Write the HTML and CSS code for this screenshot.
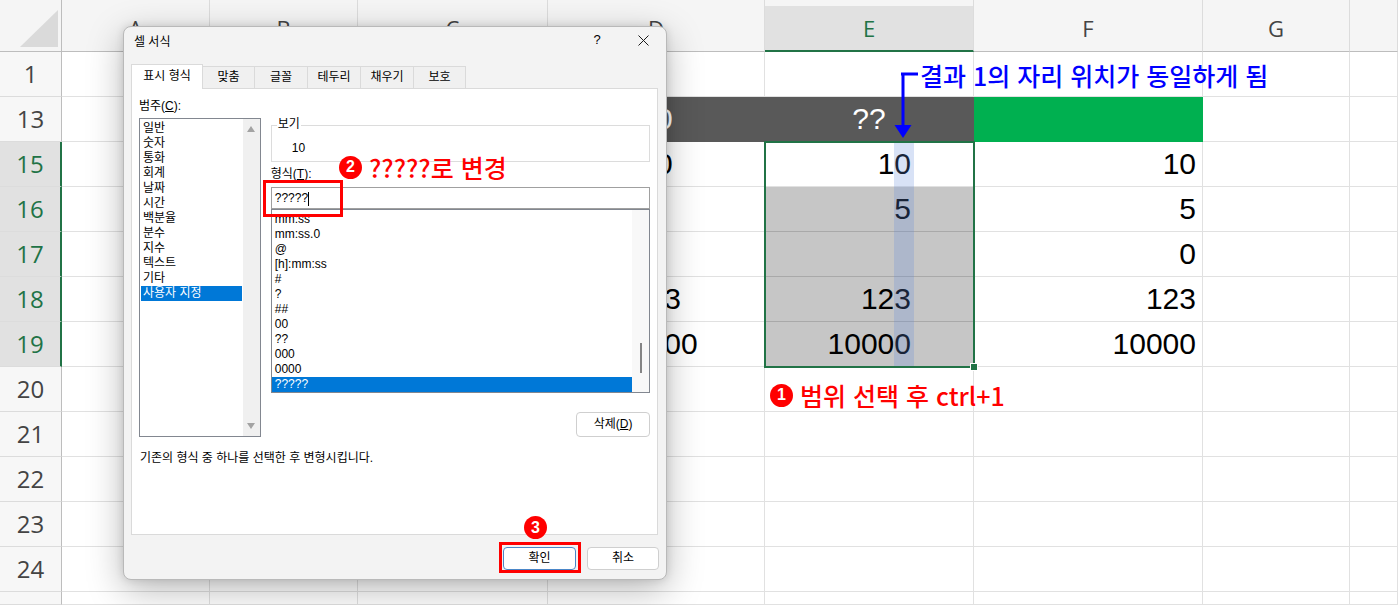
FILE: index.html
```html
<!DOCTYPE html>
<html lang="ko">
<head>
    <meta charset="UTF-8">
    <title>셀 서식</title>
    <link rel="stylesheet" href="styles.css">
</head>
<body>
<!--시트-->
<div id="sheet">
    <div class="row head">
        <div class="corner"><svg width="61" height="51"><polygon points="20,47 58,47 58,10" fill="#dadada"/></svg></div>
        <div class="ch">A</div><div class="ch">B</div><div class="ch">C</div><div class="ch">D</div><div class="ch sel">E</div><div class="ch">F</div><div class="ch">G</div><div class="ch"></div>
    </div>
    <div class="row"><div class="rh">1</div><div class="c"></div><div class="c"></div><div class="c"></div><div class="c"></div><div class="c"></div><div class="c"></div><div class="c"></div><div class="c"></div></div>
    <div class="row"><div class="rh">13</div><div class="c"></div><div class="c dark"></div><div class="c dark"></div><div class="c dark mid">10</div><div class="c dark mid narrow">??</div><div class="c green"></div><div class="c"></div><div class="c"></div></div>
    <div class="row"><div class="rh sel">15</div><div class="c"></div><div class="c"></div><div class="c"></div><div class="c mid">10</div><div class="c num e">10</div><div class="c num">10</div><div class="c"></div><div class="c"></div></div>
    <div class="row"><div class="rh sel">16</div><div class="c"></div><div class="c"></div><div class="c"></div><div class="c mid">5</div><div class="c num e gray">5</div><div class="c num">5</div><div class="c"></div><div class="c"></div></div>
    <div class="row"><div class="rh sel">17</div><div class="c"></div><div class="c"></div><div class="c"></div><div class="c mid">0</div><div class="c num e gray"></div><div class="c num">0</div><div class="c"></div><div class="c"></div></div>
    <div class="row"><div class="rh sel">18</div><div class="c"></div><div class="c"></div><div class="c"></div><div class="c mid">123</div><div class="c num e gray">123</div><div class="c num">123</div><div class="c"></div><div class="c"></div></div>
    <div class="row"><div class="rh sel">19</div><div class="c"></div><div class="c"></div><div class="c"></div><div class="c mid">10000</div><div class="c num e gray">10000</div><div class="c num">10000</div><div class="c"></div><div class="c"></div></div>
    <div class="row"><div class="rh">20</div><div class="c"></div><div class="c"></div><div class="c"></div><div class="c"></div><div class="c"></div><div class="c"></div><div class="c"></div><div class="c"></div></div>
    <div class="row"><div class="rh">21</div><div class="c"></div><div class="c"></div><div class="c"></div><div class="c"></div><div class="c"></div><div class="c"></div><div class="c"></div><div class="c"></div></div>
    <div class="row"><div class="rh">22</div><div class="c"></div><div class="c"></div><div class="c"></div><div class="c"></div><div class="c"></div><div class="c"></div><div class="c"></div><div class="c"></div></div>
    <div class="row"><div class="rh">23</div><div class="c"></div><div class="c"></div><div class="c"></div><div class="c"></div><div class="c"></div><div class="c"></div><div class="c"></div><div class="c"></div></div>
    <div class="row"><div class="rh">24</div><div class="c"></div><div class="c"></div><div class="c"></div><div class="c"></div><div class="c"></div><div class="c"></div><div class="c"></div><div class="c"></div></div>
    <div class="row last"><div class="rh"></div><div class="c"></div><div class="c"></div><div class="c"></div><div class="c"></div><div class="c"></div><div class="c"></div><div class="c"></div><div class="c"></div></div>
</div>

<!--선택 범위-->
<div class="guide"></div>
<div class="selection"><span class="handle"></span></div>

<!--설명-->
<svg class="arrow" width="30" height="70">
    <path d="M11 4 H28 M13 3 V56" stroke="#0000ff" stroke-width="3" fill="none"/>
    <polygon points="4.5,55 21.5,55 13,68" fill="#0000ff"/>
</svg>
<div class="note blue">결과 1의 자리 위치가 동일하게 됨</div>
<div class="note red step1"><span class="num-badge">1</span>범위 선택 후 ctrl+1</div>

<!--셀 서식 대화상자-->
<div class="dialog">
    <div class="titlebar">
        <span class="title">셀 서식</span>
        <span class="tb-btn help">?</span>
        <span class="tb-btn"><svg width="11" height="11"><path d="M0.5 0.5 L10.5 10.5 M10.5 0.5 L0.5 10.5" stroke="#1a1a1a" stroke-width="1"/></svg></span>
    </div>
    <div class="tabs">
        <div class="tab on wide">표시 형식</div>
        <div class="tab slim">맞춤</div>
        <div class="tab">글꼴</div>
        <div class="tab">테두리</div>
        <div class="tab">채우기</div>
        <div class="tab slim">보호</div>
    </div>
    <div class="panel">
        <div class="cols">
            <div class="left">
                <div class="label">범주(<u>C</u>):</div>
                <div class="listbox cat">
                    <ul>
                        <li>일반</li>
                        <li>숫자</li>
                        <li>통화</li>
                        <li>회계</li>
                        <li>날짜</li>
                        <li>시간</li>
                        <li>백분율</li>
                        <li>분수</li>
                        <li>지수</li>
                        <li>텍스트</li>
                        <li>기타</li>
                        <li class="on">사용자 지정</li>
                    </ul>
                    <div class="vscroll"><span class="up"></span><span class="down"></span></div>
                </div>
            </div>
            <div class="right">
                <div class="preview">
                    <span class="preview-label">보기</span>
                    10
                </div>
                <div class="label fmt-label">형식(<u>T</u>):</div>
                <div class="input">?????<span class="caret"></span></div>
                <div class="listbox fmt">
                    <ul>
                        <li>mm:ss</li>
                        <li>mm:ss.0</li>
                        <li>@</li>
                        <li>[h]:mm:ss</li>
                        <li>#</li>
                        <li>?</li>
                        <li>##</li>
                        <li>00</li>
                        <li>??</li>
                        <li>000</li>
                        <li>0000</li>
                        <li class="on">?????</li>
                    </ul>
                    <div class="vscroll light"><span class="thumb"></span></div>
                </div>
                <div class="btn-row"><span class="btn del">삭제(<u>D</u>)</span></div>
            </div>
        </div>
        <p class="hint">기존의 형식 중 하나를 선택한 후 변형시킵니다.</p>
    </div>
    <div class="footer">
        <span class="btn ok">확인</span>
        <span class="btn">취소</span>
    </div>
</div>

<!--단계 표시-->
<div class="note red step2"><span class="num-badge">2</span>?????로 변경</div>
<div class="redbox box-input"></div>
<div class="redbox box-ok"></div>
<span class="num-badge step3">3</span>
</body>
</html>
```

FILE: styles.css
```css
* {
    padding: 0;
    margin: 0;
    box-sizing: border-box;
}

body {
    width: 1398px;
    height: 605px;
    overflow: hidden;
    position: relative;
    background: #fff;
    font-family: "Liberation Sans", "Noto Sans CJK KR", sans-serif;
}

li {
    list-style: none;
}

/* 시트 */
#sheet {
    width: 1398px;
    height: 605px;
    overflow: hidden;
}

.row {
    display: grid;
    grid-template-columns: 62px 148px 148px 190px 217px 209px 229px 147px 48px;
    height: 45px;
}

.row.head {
    height: 52px;
    background: #f5f5f5;
}

.row.last {
    height: 13px;
}

.corner {
    border-right: 1px solid #bdbdbd;
    border-bottom: 1px solid #bdbdbd;
}

.corner svg {
    display: block;
}

.ch {
    padding-top: 6px;
    border-right: 1px solid #dcdcdc;
    border-bottom: 1px solid #bdbdbd;
    font: 22px "Open Sans", sans-serif;
    line-height: 45px;
    color: #444;
    text-align: center;
}

.ch.sel {
    background: linear-gradient(#f5f5f5 6px, #e1e1e1 6px);
    color: #217346;
    border-bottom: 2px solid #217346;
    line-height: 44px;
}

.rh {
    background: #f7f7f7;
    border-right: 1px solid #bdbdbd;
    border-bottom: 1px solid #dcdcdc;
    font: 24px "Open Sans", sans-serif;
    line-height: 44px;
    color: #444;
    text-align: center;
}

.rh.sel {
    background: #e1e1e1;
    color: #217346;
    border-right: 2px solid #217346;
}

.c {
    border-right: 1px solid #e1e1e1;
    border-bottom: 1px solid #e1e1e1;
    font: 30px "Liberation Sans", sans-serif;
    line-height: 44px;
    color: #000;
    white-space: nowrap;
}

.c.num {
    text-align: right;
    padding-right: 6px;
}

.c.e {
    padding-right: 62px;
}

.c.mid {
    text-align: center;
}

.c.dark {
    background: #595959;
    border-color: #595959;
    color: #fff;
}

.c.narrow {
    font-family: "Liberation Sans Narrow", "Liberation Sans", sans-serif;
}

.c.green {
    background: #00b050;
    border-color: #00b050;
}

.c.gray {
    background: #c6c6c6;
    border-bottom-color: #a9a9a9;
}

/* 선택 범위 */
.selection {
    position: absolute;
    left: 764px;
    top: 141px;
    width: 211px;
    height: 227px;
    border: 2px solid #217346;
}

.handle {
    position: absolute;
    right: -5px;
    bottom: -5px;
    width: 8px;
    height: 8px;
    background: #217346;
    border: 1px solid #fff;
}

.guide {
    position: absolute;
    left: 894px;
    top: 142px;
    width: 20px;
    height: 225px;
    background: rgba(100, 140, 220, 0.25);
}

/* 설명 */
.arrow {
    position: absolute;
    left: 890px;
    top: 70px;
}

.note {
    position: absolute;
    display: flex;
    align-items: center;
    gap: 7px;
    height: 30px;
    font: 500 25px "Noto Sans CJK KR", sans-serif;
    white-space: nowrap;
}

.note.blue {
    left: 920px;
    top: 60px;
    color: #0000ff;
}

.note.red {
    color: #ff0000;
}

.step1 {
    left: 770px;
    top: 380px;
}

.step2 {
    left: 339px;
    top: 152px;
}

.num-badge {
    display: inline-flex;
    align-items: center;
    justify-content: center;
    width: 23px;
    height: 23px;
    border-radius: 50%;
    background: #ff0000;
    color: #fff;
    font: bold 16px "Liberation Sans", sans-serif;
}

.step3 {
    position: absolute;
    left: 524px;
    top: 516px;
}

.redbox {
    position: absolute;
    border: 3px solid #ff0000;
}

.box-input {
    left: 263px;
    top: 180px;
    width: 80px;
    height: 37px;
}

.box-ok {
    left: 499px;
    top: 542px;
    width: 82px;
    height: 31px;
}

/* 대화상자 */
.dialog {
    position: absolute;
    left: 123px;
    top: 26px;
    width: 544px;
    height: 554px;
    border: 1px solid #b9b9b9;
    border-radius: 8px;
    background: #f3f3f3;
    box-shadow: 0 10px 36px rgba(0, 0, 0, 0.28), 0 0 8px rgba(0, 0, 0, 0.12);
    font-size: 12px;
    color: #000;
}

.titlebar {
    display: flex;
    align-items: center;
    height: 26px;
    padding-left: 10px;
}

.title {
    flex: 1;
}

.tb-btn {
    width: 46px;
    text-align: center;
    line-height: 14px;
}

.tb-btn svg {
    display: inline-block;
    vertical-align: middle;
}

.help {
    font-size: 13px;
}

.tabs {
    display: flex;
    align-items: flex-end;
    height: 25px;
    margin-top: 11px;
    margin-bottom: -1px;
    padding-left: 7px;
}

.tab {
    width: 54px;
    height: 22px;
    margin-bottom: 1px;
    margin-right: -1px;
    border: 1px solid #dadada;
    border-bottom: none;
    background: #f0f0f0;
    line-height: 21px;
    text-align: center;
}

.tab.wide {
    width: 72px;
}

.tab.slim {
    width: 53px;
}

.tab.on {
    height: 25px;
    margin-bottom: 0;
    background: #fff;
    line-height: 23px;
    position: relative;
    z-index: 1;
}

.panel {
    width: 527px;
    height: 447px;
    margin-left: 7px;
    padding: 10px 7px 0;
    background: #fff;
    border: 1px solid #dadada;
}

.cols {
    display: flex;
    gap: 10px;
}

.left {
    width: 122px;
}

.right {
    width: 380px;
}

.label {
    height: 15px;
    line-height: 15px;
    margin-bottom: 4px;
}

.listbox {
    display: flex;
    border: 1px solid #828790;
    overflow: hidden;
}

.listbox ul {
    flex: 1;
}

.listbox li {
    height: 15px;
    line-height: 15px;
    white-space: nowrap;
}

.listbox li.on {
    background: #0078d7;
    color: #fff;
}

.cat {
    height: 319px;
}

.cat ul {
    padding: 2px 1px;
}

.cat li {
    padding-left: 2px;
}

.vscroll {
    width: 17px;
    background: #f0f0f0;
    display: flex;
    flex-direction: column;
    justify-content: space-between;
    align-items: center;
    padding: 7px 0 7px;
}

.up {
    border-left: 4px solid transparent;
    border-right: 4px solid transparent;
    border-bottom: 6px solid #a3a3a3;
}

.down {
    border-left: 4px solid transparent;
    border-right: 4px solid transparent;
    border-top: 6px solid #a3a3a3;
}

.vscroll.light {
    background: #f8f8f8;
    justify-content: flex-end;
    padding: 0 0 19px;
}

.thumb {
    width: 2px;
    height: 30px;
    background: #858585;
}

.preview {
    position: relative;
    height: 37px;
    margin-top: 26px;
    padding: 15px 0 0 20px;
    border: 1px solid #dcdcdc;
    line-height: 15px;
}

.preview-label {
    position: absolute;
    left: 5px;
    top: -9px;
    padding: 0 1px;
    background: #fff;
}

.fmt-label {
    margin: 5px 0 5px;
}

.input {
    height: 22px;
    padding-left: 3px;
    border: 1px solid #a0a0a0;
    line-height: 20px;
}

.caret {
    display: inline-block;
    width: 1px;
    height: 14px;
    background: #000;
    vertical-align: middle;
}

.fmt {
    height: 184px;
}

.fmt ul {
    padding-top: 2px;
}

.fmt li {
    padding-left: 3px;
}

.btn-row {
    display: flex;
    justify-content: flex-end;
    margin-top: 19px;
}

.btn {
    display: inline-block;
    height: 23px;
    border: 1px solid #cfcfcf;
    border-radius: 4px;
    background: #fff;
    line-height: 21px;
    text-align: center;
}

.btn.del {
    width: 74px;
    height: 25px;
    line-height: 23px;
}

.hint {
    margin-top: 14px;
    padding-left: 1px;
    line-height: 15px;
}

.footer {
    display: flex;
    justify-content: flex-end;
    gap: 11px;
    margin-top: 12px;
    padding-right: 7px;
}

.footer .btn {
    width: 72px;
}

.btn.ok {
    width: 73px;
    border-color: #4a86c8;
}
```
